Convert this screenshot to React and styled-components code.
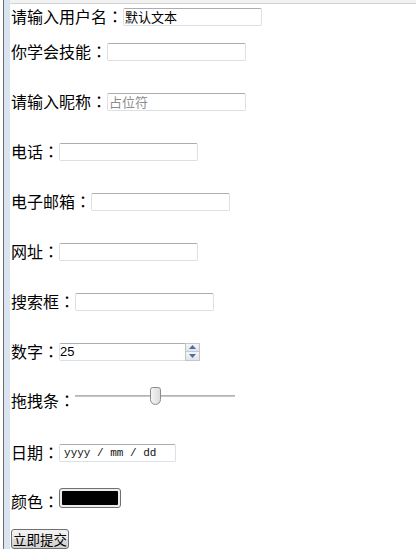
import React from "react";
import styled, { createGlobalStyle } from "styled-components";

const Global = createGlobalStyle`
  html, body { margin: 0; padding: 0; background: #fff; }
  body { overflow: hidden; }
`;

const Window = styled.div`
  display: flex;
  width: 416px;
  height: 549px;
  background: #fff;
`;

const Gutter = styled.div`
  box-sizing: border-box;
  flex: none;
  width: 7px;
  margin-left: 3px;
  background: #dae4f0;
  border-left: 1px solid #6d6d6d;
`;

const Main = styled.div`
  flex: 1;
  display: flex;
  flex-direction: column;
  min-width: 0;
`;

const TopBar = styled.div`
  height: 3px;
  background: #f2f2f2;
  border-bottom: 1px solid #d4d4d4;
  flex: none;
`;

const Form = styled.form`
  display: flex;
  flex-direction: column;
  align-items: flex-start;
  padding: 3px 0 0 1px;
  font-family: "Noto Sans CJK SC", "Microsoft YaHei", sans-serif;
`;

const Row = styled.div`
  display: flex;
  align-items: center;
  height: 19px;
  margin-top: ${(p) => p.$gap || 0}px;
`;

const Label = styled.label`
  font-size: 16px;
  line-height: 19px;
  color: #000;
  white-space: nowrap;
`;

const Colon = styled.span`
  font-family: "Noto Sans CJK JP", "Noto Sans CJK SC", sans-serif;
`;

const Field = styled.input`
  box-sizing: border-box;
  width: ${(p) => p.$w || 139}px;
  height: 18px;
  margin: 0;
  padding: 0 1px;
  border: 1px solid #dbdfe6;
  border-top-color: #abadb3;
  border-radius: 2px;
  background: #fff;
  font: 13px "Noto Sans CJK SC", sans-serif;
  color: #000;
  outline: none;
  &::placeholder {
    color: #8d8d8d;
  }
`;

const DateField = styled(Field)`
  padding: 0 4px;
  font: 11px "Liberation Mono", monospace;
  &::placeholder {
    color: #111;
  }
`;

const NumberBox = styled.div`
  box-sizing: border-box;
  display: flex;
  width: 141px;
  height: 18px;
  border: 1px solid #dbdfe6;
  border-top-color: #abadb3;
  border-radius: 2px;
  background: #fff;
`;

const NumberInput = styled.input`
  flex: 1;
  min-width: 0;
  border: none;
  margin: 0;
  padding: 0;
  font: 13px "Liberation Sans", Arial, sans-serif;
  color: #000;
  outline: none;
  -moz-appearance: textfield;
  &::-webkit-inner-spin-button,
  &::-webkit-outer-spin-button {
    -webkit-appearance: none;
    margin: 0;
  }
`;

const Spinner = styled.div`
  display: flex;
  flex-direction: column;
  width: 15px;
  flex: none;
  margin: -1px -1px -1px 0;
`;

const SpinButton = styled.span`
  box-sizing: border-box;
  flex: 1;
  display: flex;
  align-items: center;
  justify-content: center;
  border: 1px solid #c3c6cc;
  background: linear-gradient(#f6f6f6, #e2e3e6);
  & + & {
    border-top: none;
  }
`;

const Slider = styled.input`
  -webkit-appearance: none;
  appearance: none;
  width: 160px;
  height: 18px;
  margin: 0 0 9px 0;
  padding: 0;
  background: transparent;
  outline: none;
  &::-webkit-slider-runnable-track {
    height: 2px;
    background: #c6c6c6;
    border-top: 1px solid #b5b5b5;
  }
  &::-webkit-slider-thumb {
    -webkit-appearance: none;
    box-sizing: border-box;
    width: 11px;
    height: 18px;
    margin-top: -9px;
    border: 1px solid #8a8a8a;
    border-radius: 3px 3px 6px 6px;
    background: linear-gradient(90deg, #f4f4f4, #dcdcdc);
  }
`;

const ColorPick = styled.input`
  -webkit-appearance: none;
  appearance: none;
  box-sizing: border-box;
  width: 62px;
  height: 20px;
  margin: 0 0 7px 0;
  padding: 0;
  border: 1px solid #707070;
  border-radius: 3px;
  background: #ececec;
  &::-webkit-color-swatch-wrapper {
    padding: 2px;
  }
  &::-webkit-color-swatch {
    border: none;
    border-radius: 1px;
  }
`;

const Submit = styled.button`
  box-sizing: border-box;
  height: 20px;
  margin-top: ${(p) => p.$gap || 0}px;
  padding: 0 1px;
  border: 1px solid #707070;
  border-radius: 3px;
  background: linear-gradient(#f2f2f2, #ebebeb 50%, #dddddd 50%, #cfcfcf);
  font: 13.5px/18px "Noto Sans CJK SC", sans-serif;
  color: #000;
`;

const Tri = ({ up }) => (
  <svg width="7" height="4" viewBox="0 0 7 4">
    <path d={up ? "M0 4 L3.5 0 L7 4 Z" : "M0 0 L3.5 4 L7 0 Z"} fill="#4a6ea8" />
  </svg>
);

const L = ({ children }) => (
  <Label>
    {children}
    <Colon>：</Colon>
  </Label>
);

export default function App() {
  return (
    <>
      <Global />
      <Window>
        <Gutter />
        <Main>
          <TopBar />
          <Form onSubmit={(e) => e.preventDefault()}>
            <Row>
              <L>请输入用户名</L>
              <Field type="text" defaultValue="默认文本" />
            </Row>
            <Row $gap={16}>
              <L>你学会技能</L>
              <Field type="text" />
            </Row>
            <Row $gap={31}>
              <L>请输入昵称</L>
              <Field type="text" placeholder="占位符" />
            </Row>
            <Row $gap={31}>
              <L>电话</L>
              <Field type="tel" />
            </Row>
            <Row $gap={31}>
              <L>电子邮箱</L>
              <Field type="email" />
            </Row>
            <Row $gap={31}>
              <L>网址</L>
              <Field type="url" />
            </Row>
            <Row $gap={31}>
              <L>搜索框</L>
              <Field type="text" />
            </Row>
            <Row $gap={31}>
              <L>数字</L>
              <NumberBox>
                <NumberInput type="number" defaultValue="25" />
                <Spinner>
                  <SpinButton>
                    <Tri up />
                  </SpinButton>
                  <SpinButton>
                    <Tri />
                  </SpinButton>
                </Spinner>
              </NumberBox>
            </Row>
            <Row $gap={30}>
              <L>拖拽条</L>
              <Slider type="range" min="0" max="100" defaultValue="50" />
            </Row>
            <Row $gap={33}>
              <L>日期</L>
              <DateField type="text" $w={117} placeholder="yyyy / mm / dd" />
            </Row>
            <Row $gap={30}>
              <L>颜色</L>
              <ColorPick type="color" defaultValue="#000000" />
            </Row>
            <Submit type="submit" $gap={18}>立即提交</Submit>
          </Form>
        </Main>
      </Window>
    </>
  );
}
